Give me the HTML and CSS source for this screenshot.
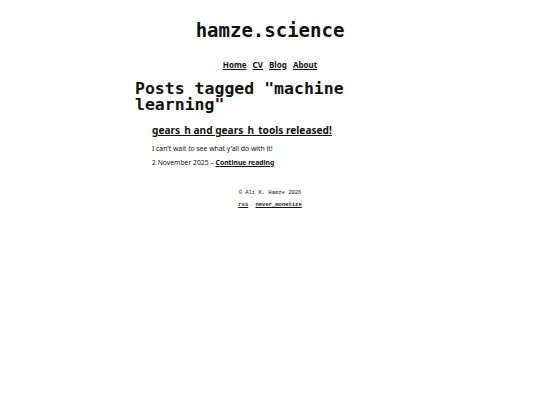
FILE: index.html
```html
<!DOCTYPE html>
<html>
<head>
<meta charset="utf-8">
<link rel="stylesheet" href="styles.css">
</head>
<body>
<header class="site-header">
  <h1 class="site-title">hamze.science</h1>
  <nav class="nav">
    <a href="#">Home</a>
    <a href="#">CV</a>
    <a href="#">Blog</a>
    <a href="#">About</a>
  </nav>
</header>
<main class="content">
  <h2 class="page-title">Posts tagged "machine learning"</h2>
  <article class="post">
    <h3 class="post-title"><a href="#">gears_h and gears_h_tools released!</a></h3>
    <p class="excerpt">I can't wait to see what y'all do with it!</p>
    <p class="meta">2 November 2025 – <a href="#">Continue reading</a></p>
  </article>
</main>
<footer class="footer">
  <p class="copy">© Ali K. Hamze 2026</p>
  <p class="links"><a href="#">rss</a> <a href="#">never_monetize</a></p>
</footer>
</body>
</html>
```
FILE: styles.css
```css
html, body { margin: 0; padding: 0; background: #fff; color: #111; }
body { font-family: "Noto Sans", sans-serif; }
a { color: #111; }
.site-header { text-align: center; padding-top: 18px; }
.site-title {
  font-family: "DejaVu Sans Mono", monospace;
  font-size: 19px; font-weight: bold; margin: 0; line-height: 24px;
}
.nav { margin-top: 17px; font-size: 8px; font-weight: bold; line-height: 12px; }
.nav a { margin: 0 2px; }
.content { width: 270px; margin: 10px auto 0; }
.page-title {
  font-family: "DejaVu Sans Mono", monospace;
  font-size: 16.5px; font-weight: bold; margin: 0; line-height: 16px;
}
.post { padding-left: 17px; margin-top: 9px; }
.post-title { font-size: 10.15px; font-weight: bold; margin: 0; line-height: 16px; }
.excerpt { font-size: 6.8px; margin: 6px 0 0; line-height: 10px; }
.meta { font-size: 6.8px; margin: 4px 0 0; line-height: 10px; }
.meta a { font-weight: bold; }
.footer { text-align: center; margin-top: 21px; font-family: "Liberation Mono", monospace; font-size: 5.5px; }
.footer p { margin: 0; line-height: 8px; }
.links { margin-top: 4px !important; font-weight: bold; }
.links a { margin: 0 2px; }
```
